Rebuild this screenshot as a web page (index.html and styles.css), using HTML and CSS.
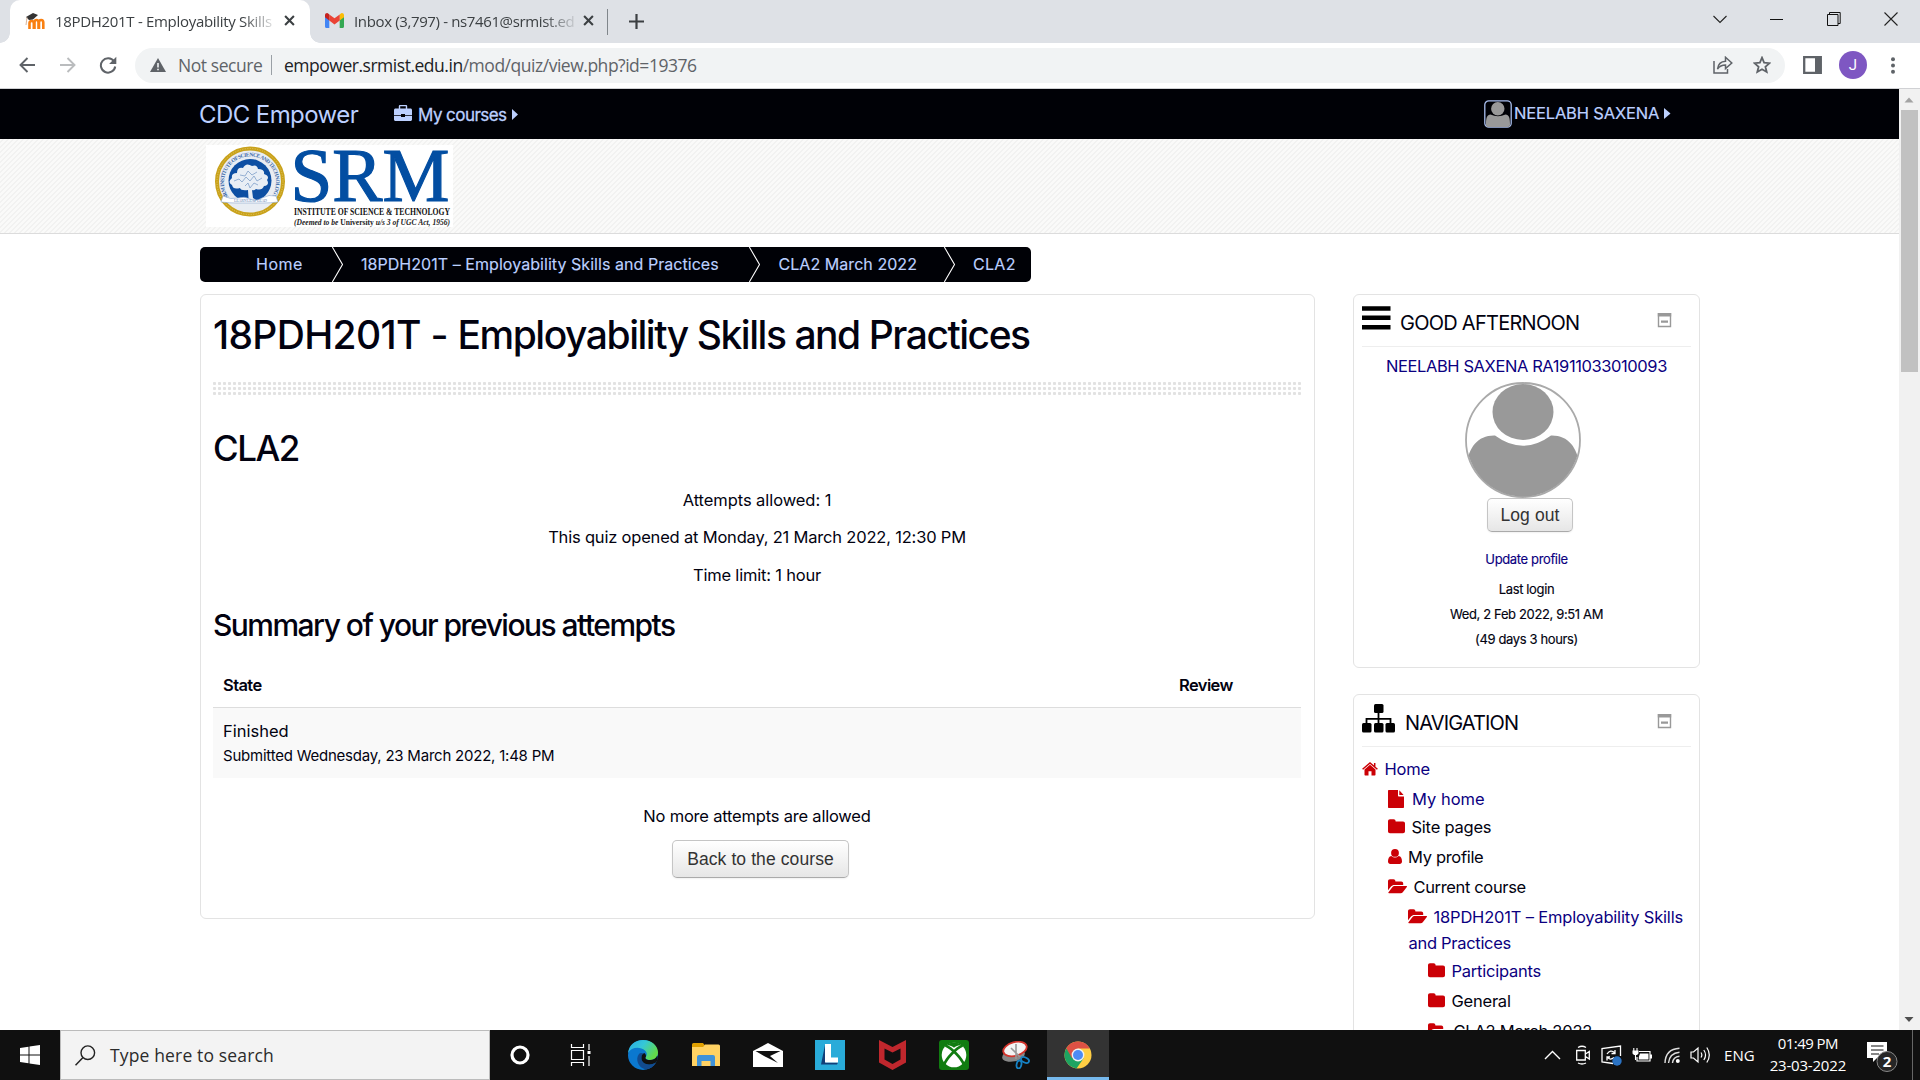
FILE: index.html
```html
<!DOCTYPE html>
<html lang="en">
<head>
<meta charset="utf-8">
<title>18PDH201T - Employability Skills and Practices</title>
<link rel="stylesheet" href="styles.css">
</head>
<body>
<svg width="0" height="0" class="defs">
  <symbol id="folder" viewBox="0 0 17 15"><path d="M0 2.200C0 1 .8.200 2 .200H5.600C6.800.200 7.600 1 7.600 2.200V2.600H15C16.200 2.600 17 3.400 17 4.600V12.200C17 13.400 16.200 14.200 15 14.200H2C.8 14.200 0 13.400 0 12.200z"/></symbol>
  <symbol id="folder-open" viewBox="0 0 19 15"><path d="M0 11.300V2.200C0 1 .8.200 2 .200h3.400c1.200 0 2 .8 2 2v.4h5.800c1.200 0 2 .8 2 2V6H6.200C5 6 3.800 6.600 3 7.500z"/><path d="M6.300 7h12c.7 0 .9.500.5 1l-4 5.200c-.5.600-1.400 1-2.100 1H1c-.7 0-.9-.5-.5-1l4-5.200c.4-.6 1.200-1 1.800-1z"/></symbol>
  <symbol id="minus-box" viewBox="0 0 15 15"><path d="M1.500.8h12v12.700h-12z" fill="none" stroke="#999" stroke-width="1.400"/><path d="M.8 0h13.400v3.500H.8zM4 7.500h7v2.200H4z" fill="#999"/></symbol>
  <symbol id="close" viewBox="0 0 10 10"><path d="M1 1l8 8M9 1L1 9" stroke="#3c4043" stroke-width="1.900" fill="none"/></symbol>
</svg>

<div class="tabstrip">
  <div class="tab tab-active">
    <svg class="favicon" width="20" height="18" viewBox="0 0 20 18"><path d="M4.500 17V11c0-2.500 4.300-3 4.300 0v6M9.500 17V10.500c0-3.400 4-3.400 4 0V17M14 17V10.500c0-3.400 4.300-3.400 4.300 0V17" fill="none" stroke="#f98012" stroke-width="2.600"/><path d="M1 5l7-4 5 2-5 4.500-4 .5z" fill="#333"/><path d="M2 5.500L1 13" stroke="#d8b49a" stroke-width="1"/></svg>
    <span class="tab-title title-one">18PDH201T - Employability Skills</span>
    <svg width="11" height="11"><use href="#close"/></svg>
  </div>
  <div class="tab tab-idle">
    <svg class="favicon" width="19" height="15" viewBox="0 0 19 15"><path d="M0 2v11.500c0 .8.600 1.500 1.400 1.500H4.300V6z" fill="#4285f4"/><path d="M14.700 15h2.900c.8 0 1.400-.7 1.400-1.500V2l-4.300 4z" fill="#34a853"/><path d="M14.700 1.400V7.500L19 4.200V2.300c0-2-2.200-2.900-3.500-1.600z" fill="#fbbc04"/><path d="M4.300 7.500V1.400L9.500 5.300l5.200-3.900v6.100L9.500 11.400z" fill="#ea4335"/><path d="M0 2.300v1.900l4.300 3.300V1.400l-.8-.7C2.200-.6 0 .3 0 2.300z" fill="#c5221f"/></svg>
    <span class="tab-title title-two">Inbox (3,797) - ns7461@srmist.ed</span>
    <svg width="11" height="11"><use href="#close"/></svg>
  </div>
  <svg class="newtab" width="15" height="15"><path d="M7.500 0v15M0 7.500h15" stroke="#3c4043" stroke-width="2.200"/></svg>
  <div class="window-controls">
    <svg width="14" height="14"><path d="M.5 4l6.500 6.500L13.500 4" fill="none" stroke="#222" stroke-width="1.100"/></svg>
    <svg width="14" height="14"><path d="M0 7.500h13" stroke="#111"/></svg>
    <svg width="14" height="14"><path d="M.5 2.500h10.500v11H.5zM2.500 2.500V.5H13.200V11.500H11" fill="none" stroke="#111"/></svg>
    <svg width="14" height="14"><path d="M.5.5l13 13M13.500.5l-13 13" stroke="#222" stroke-width="1.100"/></svg>
  </div>
</div>

<div class="toolbar">
  <svg class="tool back" width="17" height="16"><path d="M16 8H2M8.500 1L1.500 8l7 7" fill="none" stroke="#5f6368" stroke-width="1.900"/></svg>
  <svg class="tool forward" width="17" height="16"><path d="M1 8h14M8.500 1l7 7-7 7" fill="none" stroke="#babcbe" stroke-width="1.900"/></svg>
  <svg class="tool reload" width="18" height="18"><path d="M15 5.300A7.200 7.200 0 1 0 16.200 10.500" fill="none" stroke="#5f6368" stroke-width="2"/><path d="M17.300.8V8h-7.200z" fill="#5f6368"/></svg>
  <div class="omnibox">
    <svg width="16" height="14"><path d="M8 0l8 14H0z" fill="#5f6368"/><path d="M8 5v4.500M8 10.700v1.600" stroke="#f1f3f4" stroke-width="1.600"/></svg>
    <span class="insecure">Not secure</span>
    <span class="url"><b>empower.srmist.edu.in</b>/mod/quiz/view.php?id=19376</span>
    <svg class="share" width="20" height="18" viewBox="0 0 20 18"><path d="M1 5v12h13.500v-4M4.500 13c.6-5 3.500-7.600 8-7.800V1.300L18.800 7l-6.300 5.600V9c-3.500 0-6 1.200-8 4z" fill="none" stroke="#5f6368" stroke-width="1.500"/></svg>
    <svg class="star" width="18" height="18" viewBox="0 0 18 18"><path d="M9 1.700l2.100 5 5.400.5-4.100 3.500 1.300 5.300L9 13.200 4.300 16l1.300-5.300-4.100-3.500 5.400-.5z" fill="none" stroke="#5f6368" stroke-width="1.800"/></svg>
  </div>
  <svg class="panel" width="19" height="18"><path d="M1.200 1.200h16.600v15.600H1.200z" fill="none" stroke="#5f6368" stroke-width="2.300"/><path d="M12 1h6v16h-6z" fill="#5f6368"/></svg>
  <span class="profile">J</span>
  <svg class="kebab" width="4" height="17"><g fill="#5f6368"><circle cx="2" cy="2.200" r="2"/><circle cx="2" cy="8.500" r="2"/><circle cx="2" cy="14.800" r="2"/></g></svg>
</div>

<div class="viewport">
  <div class="page">
    <nav class="navbar">
      <span class="brand">CDC Empower</span>
      <svg class="briefcase" width="18" height="16" viewBox="0 0 18 16"><path d="M5.500 4V1.300c0-.4.300-.7.700-.7h5.600c.4 0 .7.300.7.700V4" fill="none" stroke="#bcd0ff" stroke-width="1.400"/><path d="M1.500 3.500h15c.8 0 1.500.7 1.500 1.500v5H11V9H7v1H0V5c0-.8.700-1.500 1.500-1.500zM0 10.700h7v1.300h4v-1.300h7v3.800c0 .8-.7 1.500-1.500 1.500h-15C.7 16 0 15.300 0 14.500z" fill="#bcd0ff"/></svg>
      <span class="courses">My courses</span>
      <svg class="caret-one" width="6" height="11"><path d="M0 0l6 5.500L0 11z" fill="#bcd0ff"/></svg>
      <svg class="mini-avatar" width="28" height="28"><rect x=".8" y=".8" width="26.400" height="26.400" rx="4" fill="none" stroke="#a9bfef" stroke-width="1.300"/><path d="M2 24c0-6 1-9.500 4.500-9.500q7.500 3.500 15 0c3.500 0 4.500 3.500 4.500 9.500v1q0 2-2 2H4q-2 0-2-2z" fill="#999"/><circle cx="13.800" cy="8.700" r="6.700" fill="#999"/></svg>
      <span class="username">NEELABH SAXENA</span>
      <svg class="caret-two" width="7" height="11"><path d="M0 0l6.500 5.500L0 11z" fill="#bcd0ff"/></svg>
    </nav>
    <header class="masthead">
      <svg width="247" height="82" viewBox="0 0 247 82">
        <rect width="247" height="82" fill="#fff"/>
        <circle cx="44" cy="36.500" r="33" fill="#e9edf3" stroke="#c9a21c" stroke-width="4"/>
        <circle cx="44" cy="36.500" r="33" fill="none" stroke="#e3c762" stroke-width="1" stroke-dasharray="1 1.500"/>
        <path id="ring" d="M22.500 52A26 26 0 1 1 65.500 52" fill="none"/>
        <text class="seal-text" textLength="112"><textPath href="#ring">SRM INSTITUTE OF SCIENCE AND TECHNOLOGY</textPath></text>
        <circle cx="44" cy="35.500" r="21.500" fill="#0d4fa3"/>
        <path d="M42.500 53l-.5-8q-7 1-8-2-7 2-8-3-5-3 0-7-1-5 5-5 0-6 6-5 3-6 9-2 5-2 6 3 7 0 6 5 6 2 3 6 3 5-3 6-2 5-8 3-2 2-4 1l1 8 5 3H36z" fill="#e8eef5"/>
        <path d="M28 36l5-2 3 3 4-5 4 4 4-5 3 5 5-3M34 30l5 1 3-5 4 4 5-3M39 41l3-3 2 5 4-5 4 2" fill="none" stroke="#7f9fc9" stroke-width=".8"/>
        <path d="M17 51q8 4 15 2t12 1 12-1 14-2l2 6q-8 1-14 1t-14 0-14 0-15-1z" fill="#fff" stroke="#8aa6cd" stroke-width=".6"/>
        <text class="motto" x="28" y="57" textLength="33">LEARN LEAP LEAD</text>
        <text class="srm" x="84.500" y="56" textLength="159" lengthAdjust="spacingAndGlyphs">SRM</text>
        <text class="institute" x="88" y="69.500" textLength="156" lengthAdjust="spacingAndGlyphs">INSTITUTE OF SCIENCE &amp; TECHNOLOGY</text>
        <text class="deemed" x="88" y="79.500" textLength="156" lengthAdjust="spacingAndGlyphs">(Deemed to be <tspan class="upright">University</tspan> u/s 3 of UGC Act, 1956)</text>
      </svg>
    </header>

    <div class="crumbs">
      <span class="crumb crumb-home">Home</span>
      <svg width="11" height="35"><path d="M.3 0L10.500 17.500.3 35" fill="none" stroke="#fff" stroke-width="1.100"/></svg>
      <span class="crumb crumb-course">18PDH201T – Employability Skills and Practices</span>
      <svg width="11" height="35"><path d="M.3 0L10.500 17.500.3 35" fill="none" stroke="#fff" stroke-width="1.100"/></svg>
      <span class="crumb crumb-section">CLA2 March 2022</span>
      <svg width="11" height="35"><path d="M.3 0L10.500 17.500.3 35" fill="none" stroke="#fff" stroke-width="1.100"/></svg>
      <span class="crumb crumb-quiz">CLA2</span>
    </div>

    <div class="columns">
      <main class="card content">
        <h1><span class="code">18PDH201T - </span>Employability Skills and Practices</h1>
        <div class="dots"></div>
        <h2>CLA2</h2>
        <p class="attempts">Attempts allowed: 1</p>
        <p class="opened">This quiz opened at Monday, 21 March 2022, 12:30 PM</p>
        <p class="limit">Time limit: 1 hour</p>
        <h3>Summary of your previous attempts</h3>
        <div class="thead"><span class="state">State</span><span>Review</span></div>
        <div class="trow"><div class="finished">Finished</div><div class="submitted">Submitted Wednesday, 23 March 2022, 1:48 PM</div></div>
        <p class="no-more">No more attempts are allowed</p>
        <button class="btn back-btn">Back to the course</button>
      </main>

      <aside>
        <section class="card block greeting">
          <div class="block-head">
            <svg class="bars" width="29" height="24"><path d="M0 2.500h28.500M0 11.800h28.500M0 21.200h28.500" stroke="#000" stroke-width="4.600"/></svg>
            <h4 class="afternoon">GOOD AFTERNOON</h4>
            <svg class="collapse" width="15" height="15"><use href="#minus-box"/></svg>
          </div>
          <a class="fullname">NEELABH SAXENA RA1911033010093</a>
          <svg class="portrait" width="118" height="118" viewBox="0 0 118 118"><defs><clipPath id="face"><circle cx="59" cy="59" r="56.500"/></clipPath></defs><circle cx="59" cy="59" r="57" fill="#fff" stroke="#aaa" stroke-width="1.800"/><g clip-path="url(#face)" fill="#999"><ellipse cx="59" cy="31" rx="30.500" ry="28"/><path d="M2 85C5 66 14 54 31 54.500Q59 75 87 54.500C104 54 113 66 116 85v33H2z"/></g></svg>
          <button class="btn logout">Log out</button>
          <a class="small update">Update profile</a>
          <div class="small last">Last login</div>
          <div class="small date">Wed, 2 Feb 2022, 9:51 AM</div>
          <div class="small ago">(49 days 3 hours)</div>
        </section>

        <section class="card block navigation">
          <div class="block-head">
            <svg class="sitemap" width="33" height="29"><path d="M16.500 8v14M4.500 20v-5.200h24V20" fill="none" stroke="#000" stroke-width="1.800"/><rect x="12" y="0" width="9.500" height="9" rx="1.500"/><rect y="19" width="9.500" height="9.500" rx="1.500"/><rect x="12" y="19" width="9.500" height="9.500" rx="1.500"/><rect x="23.500" y="19" width="9.500" height="9.500" rx="1.500"/></svg>
            <h4 class="nav-title">NAVIGATION</h4>
            <svg class="collapse collapse-nav" width="15" height="15"><use href="#minus-box"/></svg>
          </div>
          <div class="node n-home"><svg width="16" height="14" viewBox="0 0 16 14"><path d="M8 2.800l5.500 4.700v5.300c0 .4-.3.700-.7.700H9.500V9.300h-3v4.200H3.200c-.4 0-.7-.3-.7-.7V7.500z"/><path d="M.6 7.200L8 1l7.400 6.200M12.700 1v4" fill="none" stroke="#cb0006" stroke-width="1.500"/></svg><a>Home</a></div>
          <div class="node n-myhome"><svg width="16" height="18"><path d="M1 0h9v5.500c0 .6.400 1 1 1h5V17c0 .6-.4 1-1 1H1c-.6 0-1-.4-1-1V1c0-.6.400-1 1-1zM11.300.3l4.300 4.700h-4.300z"/></svg><a>My home</a></div>
          <div class="node n-site"><svg width="17" height="15"><use href="#folder"/></svg><span>Site pages</span></div>
          <div class="node n-profile"><svg width="14" height="15"><circle cx="7" cy="3.900" r="3.900"/><path d="M3.300 7q3.700 3 7.400 0C13 7.300 14 9.500 14 12.500 14 14 13 15 11.700 15H2.300C1 15 0 14 0 12.500 0 9.500 1 7.300 3.300 7z"/></svg><span>My profile</span></div>
          <div class="node n-current"><svg width="19" height="15"><use href="#folder-open"/></svg><span>Current course</span></div>
          <div class="node n-course"><svg width="19" height="15"><use href="#folder-open"/></svg><a>18PDH201T – Employability Skills</a></div>
          <div class="node n-course-end"><a>and Practices</a></div>
          <div class="node n-part"><svg width="17" height="15"><use href="#folder"/></svg><a>Participants</a></div>
          <div class="node n-general"><svg width="17" height="15"><use href="#folder"/></svg><span>General</span></div>
          <div class="node n-march"><svg width="19" height="15"><use href="#folder-open"/></svg><span>CLA2 March 2022</span></div>
        </section>
      </aside>
    </div>
  </div>
  <div class="scrollbar">
    <svg width="21" height="20"><path d="M5.500 13.500h9L10 8.500z" fill="#a3a3a3"/></svg>
    <div class="thumb"></div>
    <svg width="21" height="21"><path d="M5.500 8h9l-4.500 5z" fill="#505050"/></svg>
  </div>
</div>

<div class="taskbar">
  <div class="start"><svg width="20" height="20"><path d="M0 3l8.500-1.300v7.800H0zM9.500 1.500L20 0v9.500H9.500zM0 10.500h8.500v7.800L0 17zM9.500 10.500H20V20L9.500 18.500z" fill="#fff"/></svg></div>
  <div class="search"><svg width="21" height="21"><circle cx="12.800" cy="7.700" r="6.800" fill="none" stroke="#222" stroke-width="1.400"/><path d="M8 12.500l-7.500 7.800" stroke="#222" stroke-width="1.500"/></svg><span>Type here to search</span></div>
  <div class="apps">
    <div><svg width="20" height="20"><circle cx="10" cy="10" r="8" fill="none" stroke="#fff" stroke-width="3.200"/></svg></div>
    <div><svg width="22" height="22"><path d="M1.500 6.500h12v9h-12zM1.500 0v3.500h12V0M1.500 22v-3.500h12V22M19 0v6M19 12v10" fill="none" stroke="#fff" stroke-width="1.200"/><path d="M17.500 7h3v3h-3z" fill="#fff"/></svg></div>
    <div><svg width="30" height="30" viewBox="0 0 30 30"><defs><linearGradient id="e1" x1="0" y1="0" x2="1" y2=".5"><stop stop-color="#29a9e5"/><stop offset=".5" stop-color="#35c7d8"/><stop offset="1" stop-color="#62dc49"/></linearGradient></defs><circle cx="15" cy="15" r="15" fill="#0b78cf"/><path d="M0 13C1 5 7 0 15 0c9 0 15 6 15 12.500 0 5-4 7.500-8 7.500-3 0-5-1-4.500-2.500 2-2.500 1.500-5-.5-7C12 6 3 7 0 13z" fill="url(#e1)"/><path d="M11 14c-4 5-1 14 7 15.500 4-.8 8-3 10-7-7 4-15 1.500-14.500-5 0-2 1-3 2.500-4-2-1-4-.5-5 .5z" fill="#124b8f"/><path d="M17.500 17.500c-.5 1.500 1.500 2.500 4.500 2.500 3 0 6-1.500 7.300-4.500 1 3 .2 5.500-1.300 7-7 4-15 1.500-14.500-5 0-2 1-4 3-4.500 1.500 1.500 2 3 1 4.500z" fill="#101010"/></svg></div>
    <div><svg width="28" height="24" viewBox="0 0 28 24"><path d="M0 1.500Q0 0 1.500 0H11l2 2.500-2 2H0z" fill="#e0a000"/><path d="M0 4h11l2-2.500h13.500Q28 1.500 28 3v20H0z" fill="#ffd263"/><path d="M5 23V14q0-2 2-2h14q2 0 2 2v9h-4.500v-5h-9v5z" fill="#3f92d8"/></svg></div>
    <div><svg width="30" height="24"><path d="M0 8L15 0l15 8v16H0z" fill="#fff"/><path d="M2.500 8h25L17 13l8 7-14-7z" fill="#101010"/></svg></div>
    <div><svg width="30" height="30"><path d="M0 0h30v30H0z" fill="#29abd9"/><path d="M10 5L6 24.500h16l1-2H11z" fill="#123f78"/><path d="M10 4h6v13.500h7v5H10z" fill="#fff"/></svg></div>
    <div><svg width="27" height="30"><path d="M0 0l13.500 7L27 0v22.500L13.500 30 0 22.500zM5.500 8.500v11l8 4.500 8-4.500v-11l-8 4z" fill="#c0272d" fill-rule="evenodd"/></svg></div>
    <div><svg width="30" height="30"><rect width="30" height="30" rx="3" fill="#107c10"/><circle cx="15" cy="15" r="12.300" fill="#fff"/><path d="M7 5.500c3-.8 6 .8 8 2.300 2-1.500 5-3.100 8-2.300C19 1.500 11 1.500 7 5.500z" fill="#107c10"/><path d="M6.500 5.500C13 8.500 22.500 18 25 25M23.500 5.500C17 8.500 7.500 18 5 25" fill="none" stroke="#107c10" stroke-width="2.600"/></svg></div>
    <div><svg width="28" height="28" viewBox="0 0 28 28"><ellipse cx="11.500" cy="14.500" rx="11.500" ry="6" transform="rotate(-12 11.500 14.500)" fill="#888"/><ellipse cx="13" cy="8" rx="12" ry="6.800" transform="rotate(-15 13 8)" fill="#f4f4f4" stroke="#d3352d" stroke-width="1.800"/><path d="M14 3v15M9 7l9 9" stroke="#999" stroke-width="1.600"/><ellipse cx="17" cy="23.500" rx="2.400" ry="4" transform="rotate(10 17 23.500)" fill="none" stroke="#1682c5" stroke-width="1.800"/><ellipse cx="23" cy="19" rx="4.200" ry="2.500" transform="rotate(25 23 19)" fill="none" stroke="#1682c5" stroke-width="1.800"/></svg></div>
    <div class="running"><svg width="28" height="28" viewBox="0 0 28 28"><circle cx="14" cy="14" r="13.500" fill="#ffce44"/><path d="M14 14L2.300 7.200A13.500 13.500 0 0 0 12.500 27.400L19.500 17.500z" fill="#1da462"/><path d="M2.300 7.200A13.500 13.500 0 0 1 25.800 7.500H14L8 17.200z" fill="#dd5144"/><circle cx="14" cy="14" r="6.400" fill="#f1f1f1"/><circle cx="14" cy="14" r="5" fill="#4c8bf5"/></svg></div>
  </div>
  <div class="tray">
    <svg width="17" height="10"><path d="M1 9l7.500-7.500L16 9" fill="none" stroke="#fff" stroke-width="1.400"/></svg>
    <svg class="meet" width="16" height="20"><path d="M1.700 5.500h8.600v9.500H1.700zM10.500 9l3.800-2.500v7.500L10.500 11.500M3 2.500q4-2.500 8 0M3 18q4 2 8 0" fill="none" stroke="#fff" stroke-width="1.300"/></svg>
    <svg class="sync" width="21" height="21"><path d="M19.500 11V1L1 3.500V17l11 1.500" fill="none" stroke="#fff" stroke-width="1.300"/><path d="M6 9q3.500-5 7.500-1.500M14 5v3.500h-3.500M13 12.500Q9 16 6.500 12M6 15.500V12h3" fill="none" stroke="#fff" stroke-width="1.300"/><circle cx="16" cy="16" r="4.700" fill="#2b73c4"/></svg>
    <svg class="battery" width="20" height="15"><path d="M7 3.500h11v9.500H5V9" fill="none" stroke="#fff" stroke-width="1.200"/><path d="M8 5.500h8.500v6H6.800V9zM18 6.500h2v4h-2zM.5 2.500h6v3L5 7H2L.5 5.500z" fill="#fff"/><path d="M1.800 0v3M5 0v3M3.500 6.500V12" stroke="#fff" stroke-width="1.100"/></svg>
    <svg class="wifi" width="17" height="17"><path d="M1 16Q1.500 2 15.500 1.200M4.500 16Q5.500 6 15.500 5.200M8.500 16Q9 10 15.500 9.300" fill="none" stroke="#ddd" stroke-width="1.400"/><circle cx="13.800" cy="14" r="2" fill="#fff"/></svg>
    <svg class="volume" width="21" height="18"><path d="M1 6v6h2.500L8 16V2L3.500 6z" fill="none" stroke="#fff" stroke-width="1.200"/><path d="M11 6.500q1.700 2.500 0 5M13.800 4q3.500 5 0 10M16.800 1.500q5 7.500 0 15" fill="none" stroke="#fff" stroke-width="1.200"/></svg>
    <span class="lang">ENG</span>
    <div class="clock"><span class="time">01:49 PM</span><span>23-03-2022</span></div>
    <svg class="notices" width="31" height="31" viewBox="0 0 31 31"><path d="M0 0h20v16H10l-4 4v-4H0z" fill="#fff"/><path d="M4 4h12.500M4 8h12.500M4 12h8" stroke="#101010" stroke-width="1.200"/><circle cx="20" cy="19.500" r="10" fill="#262626" stroke="#888" stroke-width="1"/><text x="20" y="25" text-anchor="middle" class="count">2</text></svg>
    <div class="peek"></div>
  </div>
</div>
</body>
</html>
```
FILE: styles.css
```css
* { box-sizing: border-box; }
body {
  margin: 0; width: 1920px; height: 1080px; overflow: hidden;
  display: flex; flex-direction: column; background: #fff;
  font-family: Inter, "Liberation Sans", sans-serif; font-size: 16.5px; line-height: 24px; color: #020210;
}
svg { display: block; flex: none; }
.defs { display: none; }
span, a { white-space: nowrap; }
h1, h2, h3, h4, p { margin: 0; font-weight: 400; }

/* Browser tabs */
.tabstrip, .toolbar, .taskbar { font-family: "Open Sans", "Noto Sans", sans-serif; }
.tabstrip { height: 43px; background: #dee1e6; display: flex; align-items: center; padding-left: 10px; flex: none; }
.tab { display: flex; align-items: center; height: 43px; padding-bottom: 1px; font-size: 15px; color: #3c4043; }
.tab-active { position: relative; width: 300px; background: #fff; border-radius: 10px 10px 0 0; padding: 0 0 2px 15px; }
.tab-active::before, .tab-active::after { content: ""; position: absolute; bottom: 0; width: 10px; height: 10px; }
.tab-active::before { left: -10px; background: radial-gradient(circle at 0 0, transparent 9.5px, #fff 10px); }
.tab-active::after { right: -10px; background: radial-gradient(circle at 100% 0, transparent 9.5px, #fff 10px); }
.tab-idle { width: 298px; height: 26px; border-right: 1.5px solid #80868b; padding: 0 0 2px 15px; }
.favicon { margin-right: 10px; }
.tab-title { overflow: hidden; width: 218px; margin-right: 11px; -webkit-mask-image: linear-gradient(90deg, #000 86%, rgba(0,0,0,.15)); mask-image: linear-gradient(90deg, #000 86%, rgba(0,0,0,.15)); }
.title-one { letter-spacing: -.31px; }
.title-two { letter-spacing: -.365px; width: 220px; margin-right: 9px; }
.newtab { margin-left: 21px; }
.window-controls { margin-left: auto; display: flex; gap: 43px; padding: 0 22px 6px 0; }

/* Address bar */
.toolbar { height: 46px; border-bottom: 1px solid #d0d1d4; display: flex; align-items: center; flex: none; font-size: 17.5px; padding-bottom: 1px; }
.back { margin-left: 19px; }
.forward { margin-left: 23px; }
.reload { margin-left: 23px; }
.omnibox { margin-left: 18px; width: 1650px; height: 35px; border-radius: 18px; background: #f1f3f4; display: flex; align-items: center; padding-left: 15px; }
.insecure { margin-left: 12px; color: #5f6368; letter-spacing: -.44px; padding-right: 10px; border-right: 1.5px solid #9aa0a6; line-height: 20px; width: 94px; }
.url { margin-left: 12px; color: #5f6368; letter-spacing: -.478px; }
.url b { font-weight: 400; color: #202124; }
.share { margin-left: auto; }
.star { margin: 0 14px 0 20px; }
.panel { margin-left: 18px; }
.profile { margin-left: 17px; width: 28px; height: 28px; border-radius: 50%; background: #7e57c2; color: #fff; font: 15px/28px Roboto, sans-serif; text-align: center; }
.kebab { margin-left: 24px; }

/* Site header */
.viewport { display: flex; height: 941px; flex: none; overflow: hidden; }
.page { width: 1899px; height: 941px; overflow: hidden; }
.navbar { height: 50px; background: #000106; color: #bcd0ff; display: flex; padding-left: 199px; }
.brand { font-size: 24px; letter-spacing: -.58px; line-height: 30px; margin-top: 11px; width: 195px; }
.briefcase { margin-top: 16px; }
.courses { font-size: 17px; letter-spacing: -.557px; margin: 14px 0 0 6px; width: 94px; -webkit-text-stroke: .3px; }
.caret-one { margin-top: 20px; }
.mini-avatar { margin: 11px 0 0 966px; }
.username { margin: 12px 0 0 2px; letter-spacing: -.173px; width: 150px; -webkit-text-stroke: .2px; }
.caret-two { margin-top: 19px; }
.masthead { height: 95px; border-bottom: 1px solid #dcdcdc; padding: 6px 0 0 206px; background: repeating-linear-gradient(135deg, #fafaf9 0 2.12px, #f2f2f1 2.12px 3.535px); }
.seal-text { font: bold 5.5px "Liberation Serif", serif; fill: #3c69a8; }
.motto { font: 4px "Liberation Serif", serif; fill: #5f82b5; }
.srm { font: 76px "Liberation Serif", serif; fill: #034ea2; stroke: #034ea2; stroke-width: 1.2px; }
.institute { font: bold 10.5px "Liberation Serif", serif; fill: #111; }
.deemed { font: italic bold 9px "Liberation Serif", serif; fill: #222; }
.upright { font-style: normal; }

/* Breadcrumb */
.crumbs { display: flex; width: 831px; height: 35px; margin: 13px 0 12px 200px; background: #000106; color: #bcd0ff; border-radius: 5px; font-size: 16px; line-height: 35px; letter-spacing: .05px; -webkit-text-stroke: .15px; }
.crumb { flex: none; }
.crumb-home { width: 132px; padding-left: 56px; letter-spacing: .5px; }
.crumb-course { width: 406px; padding-left: 18px; }
.crumb-section { width: 184px; padding-left: 18.5px; }
.crumb-quiz { padding-left: 18px; letter-spacing: .3px; }

/* Main card */
.columns { display: flex; gap: 38px; padding-left: 200px; align-items: flex-start; }
.card { border: 1px solid #e3e3e3; border-radius: 6px; background: #fff; }
.content { width: 1115px; height: 625px; padding: 16px 13px 0 12px; }
h1 { font-size: 39px; line-height: 48px; font-weight: 500; letter-spacing: -1.46px; white-space: nowrap; }
.code { letter-spacing: -.68px; white-space: pre; }
.dots { height: 13px; margin: 23px 0 31px; background: radial-gradient(circle at 1.5px 1.5px, #e2e2e2 1.3px, transparent 1.9px) 0 0 / 5px 5px; }
h2 { font-size: 35px; line-height: 44px; font-weight: 500; letter-spacing: -1.5px; }
p { text-align: center; }
.attempts { margin-top: 18px; letter-spacing: -.07px; }
.opened { margin-top: 13px; letter-spacing: -.193px; }
.limit { margin-top: 14px; letter-spacing: -.197px; }
h3 { font-size: 30px; line-height: 38px; font-weight: 500; letter-spacing: -1.527px; margin: 18px 0 20px; position: relative; top: 1px; }
.thead { display: flex; padding: 10px; border-bottom: 1px solid #ddd; font-weight: 600; letter-spacing: -.6px; height: 45px; }
.state { width: 956px; }
.trow { background: #f9f9f9; padding: 11px 10px; height: 70px; }
.submitted { font-size: 15px; letter-spacing: -.223px; line-height: 25px; }
.no-more { margin: 26px 0 12px; letter-spacing: -.2px; }
.btn { display: block; border: 1px solid #c5c5c5; border-bottom-color: #aaa; border-radius: 5px; background: linear-gradient(#fff, #e6e6e6); color: #333; font: 17.5px "Liberation Sans", sans-serif; letter-spacing: .1px; padding: 0; box-shadow: 0 1px 2px rgba(0,0,0,.06); }
.back-btn { width: 177px; height: 38px; margin: 0 0 0 459px; }

/* Side blocks */
.block { width: 347px; padding: 0 8px; display: flex; flex-direction: column; align-items: center; }
.greeting { height: 374px; margin-bottom: 26px; }
.navigation { height: 500px; align-items: stretch; }
.block-head { height: 52px; width: 329px; border-bottom: 1px solid #eee; display: flex; flex: none; }
h4 { font-size: 20px; line-height: 24px; margin-top: 16px; white-space: nowrap; }
.bars { margin-top: 11px; }
.afternoon { letter-spacing: -.741px; margin-left: 9px; }
.sitemap { margin-top: 9px; }
.nav-title { letter-spacing: -.868px; margin-left: 10px; }
.collapse { margin: 18px 19px 0 auto; }
.collapse-nav { margin-top: 19px; }
a { color: #0b0080; }
.fullname { margin-top: 7px; letter-spacing: -.41px; }
.portrait { margin: 3px 7px 0 0; }
.logout { width: 86px; height: 34px; margin: -1px 0 0 7px; position: relative; }
.small { font-size: 13px; line-height: 20px; letter-spacing: -.36px; -webkit-text-stroke: .15px; }
.update { margin-top: 17px; }
.last { margin-top: 10px; }
.date, .ago { margin-top: 5px; }

/* Navigation tree */
.node { display: flex; height: 24px; letter-spacing: -.23px; flex: none; }
.node svg { fill: #cb0006; margin: 4px 6.5px 0 0; }
.n-home { margin-top: 10px; }
.n-home svg { margin-top: 5px; }
.n-myhome { margin: 6px 0 0 26px; letter-spacing: 0; }
.n-myhome svg { margin: 3px 8px 0 0; }
.n-site { margin: 4px 0 0 26px; }
.n-profile { margin: 6px 0 0 26px; letter-spacing: -.32px; }
.n-profile svg { margin-right: 6px; }
.n-current { margin: 6px 0 0 26px; letter-spacing: -.355px; }
.n-course { margin: 6px 0 0 46px; letter-spacing: -.189px; }
.n-course-end { margin: 2px 0 0 46.5px; letter-spacing: -.3px; }
.n-part { margin: 4px 0 0 66px; }
.n-general { margin: 6px 0 0 66px; }
.n-march { margin: 6px 0 0 66px; }

/* Scrollbar */
.scrollbar { width: 21px; background: #f1f1f1; display: flex; flex-direction: column; }
.thumb { width: 17px; height: 262px; margin: 1px 0 auto 2px; background: #c1c1c1; }

/* Taskbar */
.taskbar { height: 50px; background: #101010; display: flex; align-items: center; color: #fff; flex: none; }
.start { width: 60px; padding-left: 20px; }
.search { width: 430px; height: 50px; background: #f3f3f3; border: 1px solid #bbb; color: #2b2b2b; font-size: 17.5px; letter-spacing: .15px; display: flex; align-items: center; padding-left: 14px; }
.search span { margin-left: 14px; padding-bottom: 1px; }
.apps { display: grid; grid-template-columns: 60px 61px 64px repeat(7, 62px); height: 50px; }
.apps div { display: flex; align-items: center; justify-content: center; }
.apps .running { background: #333; border-bottom: 3px solid #76b9ed; padding-top: 3px; }
.tray { margin-left: auto; width: 377px; display: flex; align-items: center; font-size: 15px; height: 50px; }
.tray > svg:first-child { margin-left: 1px; }
.meet { margin-left: 14px; }
.sync { margin-left: 10px; }
.battery { margin-left: 10px; }
.wifi { margin-left: 12px; }
.volume { margin-left: 9px; }
.lang { margin-left: 13px; letter-spacing: .1px; }
.clock { display: flex; flex-direction: column; align-items: center; width: 78px; margin-left: 14px; line-height: 22.5px; letter-spacing: -.19px; padding-bottom: 2px; }
.time { letter-spacing: -.55px; }
.notices { margin: 4px 0 0 20px; }
.count { font: bold 15px "Open Sans", sans-serif; fill: #fff; }
.peek { width: 1px; height: 50px; background: #666; margin-left: 14px; }
```
